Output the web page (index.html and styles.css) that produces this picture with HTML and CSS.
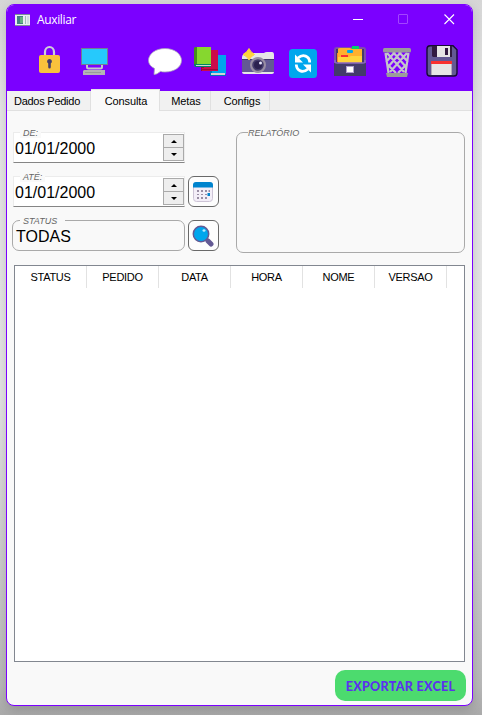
FILE: index.html
```html
<!DOCTYPE html>
<html lang="pt-BR">
<head>
<meta charset="utf-8">
<title>Auxiliar</title>
<link rel="stylesheet" href="styles.css">
</head>
<body>
<div class="window">
  <header class="titlebar">
    <svg class="app-icon" width="15" height="12" viewBox="0 0 15 12"><path fill="#e8eef0" d="M0 0h15v12H0z"/><path fill="#7b9298" d="M0 0h15v1H0zM0 11h15v1H0z"/><path fill="#437d86" d="M2 2h6v8H2z"/><path fill="#65b080" d="M5 3h3v6H5z"/><path fill="#a4b7bd" d="M10 2h1v8h-1z"/><path fill="#d1dce3" d="M12 2h2v8h-2z"/></svg>
    <span class="title">Auxiliar</span>
    <svg class="controls" width="102" height="12" viewBox="0 0 102 12" fill="none"><path stroke="#fff" d="M0 6.500h10"/><rect x="45.500" y="1.500" width="9" height="9" rx=".5" stroke="#a345ff"/><path stroke="#fff" stroke-width="1.100" d="M91.500 1.500l9.500 9.500M101 1.500l-9.500 9.500"/></svg>
  </header>

  <nav class="toolbar">
    <svg class="lock" width="21" height="32" viewBox="0 0 21 32"><path d="M6 11V7a4.500 5 0 0 1 9 0v4" fill="none" stroke="#d0ced8" stroke-width="2.200"/><rect y="10" width="21" height="18" rx="2" fill="#f9c23c"/><path fill="#433b6b" d="M10.500 14a2.500 2.500 0 0 1 1.300 4.600V22q0 1.500-1.300 1.500T9.200 22v-3.400A2.500 2.500 0 0 1 10.500 14z"/></svg>
    <svg class="pc" width="28" height="32" viewBox="0 0 28 32"><path fill="#737c92" d="M0 3h27v17H0z"/><path fill="#26c9fc" d="M1 4h25v15H1z"/><path d="M6 20v2q0 1.500 1.500 1.500h12q1.500 0 1.500-1.500v-2" fill="none" stroke="#c5c5ca" stroke-width="2"/><path fill="#b4b4b4" d="M3 25h21v5H2v-4z"/><path d="M4 27.500h16" stroke="#9a9a9a"/></svg>
    <svg class="chat" width="34" height="32" viewBox="0 0 34 32"><path fill="#fff" stroke="#aaa3bc" stroke-width=".8" d="M17 3.500c9.500 0 16.500 5.500 16.500 12S26.500 27 17 27q-2.500 0-4.500-.6Q9 29.500 6 29.500l.5-6C2.500 21.500.5 18.500.5 15.500c0-6.500 7-12 16.500-12z"/></svg>
    <svg class="books" width="32" height="32" viewBox="0 0 32 32"><path fill="#00a6ed" d="M16 10h16v19H16z"/><path fill="#0074ba" d="M16 10h2v20h-2z"/><path fill="#d3d3d3" d="M17 28h14v2H17z"/><path fill="#0074ba" d="M16 30h16v1H16z"/><path fill="#ca0b4a" d="M8 5h16v19H8z"/><path fill="#990838" d="M7 5h3v21H7z"/><path fill="#ca0b4a" d="M8 23h16v3H8z"/><path fill="#990838" d="M8 24h16v1H8z"/><path fill="#86d72f" d="M2 2h15v18H2z"/><path fill="#44911b" d="M0 3q0-1 2-1h1v18H0z"/><path fill="#d3d3d3" d="M2 20h15v1H2z"/><path fill="#008463" d="M0 19h17v1H2v1h15v1H2q-2 0-2-2z"/></svg>
    <svg class="camera" width="32" height="32" viewBox="0 0 32 32"><path fill="#e6e6e6" d="M0 12q0-2 2-3l7-1h11l2 0q1-1 3-1h5q2 0 2 3v17q0 2-2 2H2q-2 0-2-2z"/><path fill="#635994" d="M0 14h32v13H0z"/><path fill="#433b6b" d="M0 14h32v1H0z"/><circle cx="16" cy="20" r="8" fill="#998ea4"/><circle cx="16" cy="20" r="5.800" fill="#433b6b"/><circle cx="16" cy="20" r="4" fill="#2b2050"/><circle cx="18.500" cy="18" r="1.500" fill="#e9e9ff"/><path fill="#ffd33b" d="M7 3.500q1 3 5.500 6Q8.500 11.500 7 15 5.500 11.500 1 9.500 5.500 7 7 3.500z" stroke="#ffd33b"/></svg>
    <svg class="sync" width="28" height="33" viewBox="0 0 28 33"><rect y="4" width="28" height="29" rx="3.500" fill="#00a6ed"/><path fill="none" stroke="#fff" stroke-width="2.800" d="M9 13C14 8.500 20.500 11 20.700 17.500M19 24C14 28.500 7.500 26 7.300 19.500"/><path fill="#fff" d="M6 9.500v8h8zM22 27.500v-8h-8z"/></svg>
    <svg class="cabinet" width="32" height="32" viewBox="0 0 32 32"><path fill="#7d4cab" d="M0 5q0-3 3-3h26q3 0 3 3v13H0z"/><path fill="#433b6b" d="M2 4h28v14H2z"/><path fill="#00d26a" d="M18 1h7v4h-7z"/><path fill="#ffb02e" d="M4 4q0-1 2-1h10l2 1h10v14H4z"/><path fill="#ff822d" d="M3 8h1v9H3z"/><path fill="#ffd33b" d="M4 12h11l2-1h11v7H4z"/><rect x="13" y="5" width="6" height="3" rx="1" fill="#00a6ed"/><rect x="7" y="10" width="7" height="2" fill="#f8312f"/><path fill="#433b6b" d="M0 18h32v13H0z"/><path fill="none" stroke="#8c67c4" stroke-width="1.500" d="M1 15v2q0 1 2 1h26q2 0 2-1v-2"/><rect x="12.500" y="21.500" width="7" height="6" fill="#fff" stroke="#af9ed0"/></svg>
    <svg class="trash" width="28" height="33" viewBox="0 0 28 33"><path d="M2.500 8l3 20M25.500 8l-3 20M4 8l17 19M24 8L7 27M10 7l13 15M18 7L5 22M16 7l9 10M12 7L3 17M5 20l8 8M23 20l-8 8" stroke="#c4c4cc" stroke-width="2.200" fill="none"/><rect y="3" width="28" height="4.500" rx="1.500" fill="#9b9b9b"/><path fill="#9b9b9b" d="M3 28h22l-1 4H4z"/></svg>
    <svg class="disk" width="32" height="32" viewBox="0 0 32 32"><path fill="#635994" stroke="#150b35" stroke-width="1.400" d="M4 .800h23l4 4V28q0 3-3 3H4q-3 0-3-3V4Q1 .800 4 .800z"/><path fill="#321b41" d="M6 1h20v11H7l-1-1z"/><path fill="#e6e6e6" d="M11 1h13v11H11z"/><path fill="#321b41" d="M19 3h3v7h-3z"/><path fill="#f8312f" d="M5 16h21v3H5z"/><path fill="#e6e6e6" d="M5 19h21v11H5z"/><path fill="#b4acbc" d="M5 19h1v11H5zM25 19h1v11h-1z"/></svg>
  </nav>

  <div class="tabs">
    <div class="tab t1">Dados Pedido</div>
    <div class="tab t2 active">Consulta</div>
    <div class="tab t3">Metas</div>
    <div class="tab t4">Configs</div>
    <div class="tab-rest"></div>
  </div>

  <main class="page">
    <section class="filters">
      <div class="fields">
        <div class="date"><span class="caption">DE:</span><span class="value">01/01/2000</span>
          <div class="spin"><i class="up"></i><i class="down"></i></div></div>
        <div class="date"><span class="caption">ATÉ:</span><span class="value">01/01/2000</span>
          <div class="spin"><i class="up"></i><i class="down"></i></div></div>
        <div class="group status"><span class="caption">STATUS</span><span class="value">TODAS</span></div>
      </div>
      <div class="actions">
        <button class="tool calendar" aria-label="Calendário"><svg width="20" height="20" viewBox="0 0 20 20"><rect x=".5" y=".5" width="19" height="19" rx="3" fill="#f3eef8" stroke="#cdc4d6"/><path fill="#0084ce" d="M0 5.500V3q0-3 3-3h14q3 0 3 3v2.500z"/><path fill="#998ea4" d="M4 8h2v2H4zM8 8h2v2H8zM12 8h2v2h-2zM4 12h2v1H4zM8 12h2v1H8zM12 12h2v1h-2zM4 15h2v2H4zM8 15h2v2H8zM12 15h2v2h-2zM15.500 8h1.500v2h-1.500z"/><path fill="#0084ce" d="M14.500 11h2.500v3h-2.500z"/></svg></button>
        <button class="tool search" aria-label="Pesquisar"><svg width="22" height="22" viewBox="0 0 22 22"><path d="M13.500 13.500l3 3" stroke="#9b9b9b" stroke-width="2.500"/><path d="M16 16l3 3" stroke="#635994" stroke-width="5" stroke-linecap="round"/><circle cx="9" cy="9" r="7.700" fill="#00a6ed" stroke="#635994" stroke-width="1.500"/><ellipse cx="12" cy="5.500" rx="1.500" ry="1.200" fill="#b8edff"/></svg></button>
      </div>
      <div class="group report"><span class="caption">RELATÓRIO</span></div>
    </section>

    <div class="table">
      <div class="thead"><span>STATUS</span><span>PEDIDO</span><span>DATA</span><span>HORA</span><span>NOME</span><span>VERSAO</span></div>
    </div>
    <button class="export">EXPORTAR EXCEL</button>
  </main>
</div>
</body>
</html>
```
FILE: styles.css
```css
* { box-sizing: border-box; }
body {
  margin: 0;
  width: 482px;
  height: 715px;
  padding: 4px 9px 9px 6px;
  overflow: hidden;
  background: linear-gradient(#d6d6d6, #e6e6e6 15%, #e4e4e4 55%, #b8b8b8 96%, #aaa);
  font-family: "Liberation Sans", Arial, sans-serif;
  color: #000;
}
.window {
  width: 467px;
  height: 702px;
  border: 1px solid #7b00ff;
  border-radius: 8px;
  background: #f9f9f9;
  overflow: hidden;
  box-shadow: 0 4px 12px rgba(0, 0, 0, .16);
  display: flex;
  flex-direction: column;
}
.titlebar {
  height: 31px;
  flex: none;
  background: #7b00ff;
  display: flex;
  align-items: center;
  padding: 0 17px 0 8px;
}
.app-icon { margin-top: -2px; }
.title {
  margin: -3px 0 0 7px;
  color: #fff;
  font: 12px "Open Sans", "Noto Sans", sans-serif;
  letter-spacing: -.35px;
}
.controls { margin: -3px 0 0 auto; }
.toolbar {
  height: 55px;
  flex: none;
  background: #7b00ff;
  display: flex;
  padding: 9px 0 0 32px;
}
.toolbar svg { flex: none; }
.pc { margin-left: 21px; }
.chat { margin-left: 39px; }
.books { margin-left: 12px; }
.camera { margin-left: 16px; }
.sync { margin-left: 15px; }
.cabinet { margin-left: 17px; }
.trash { margin-left: 17px; }
.disk { margin-left: 15px; }

.tabs {
  display: flex;
  height: 20px;
  flex: none;
  background: #efefef;
  font-size: 11px;
  letter-spacing: -.1px;
}
.tab {
  height: 20px;
  padding-top: 4px;
  padding-left: 2px;
  line-height: 13px;
  text-align: center;
  border-right: 1px solid #e0e0e0;
  border-bottom: 1px solid #e0e0e0;
  background: #f1f1f1;
  white-space: nowrap;
}
.t1 { width: 84px; padding: 4px 3px 0 0; letter-spacing: -.25px; }
.t2 { width: 69px; }
.t3 { width: 51px; }
.t4 { width: 59px; padding-left: 4px; }
.tab.active {
  height: 22px;
  margin-top: -2px;
  padding-top: 5px;
  background: #f9f9f9;
  border-bottom: 0;
  border-top: 1px solid #e6e6e6;
}
.tab-rest { flex: 1; border-bottom: 1px solid #e0e0e0; }

.page {
  flex: 1;
  padding: 21px 6px 0 5px;
  display: flex;
  flex-direction: column;
}
.filters { display: flex; height: 121px; flex: none; }
.fields {
  width: 173px;
  display: flex;
  flex-direction: column;
  gap: 13px;
}
.date, .group { position: relative; display: flex; }
.date {
  height: 31px;
  margin: 0 0 0 1px;
  border: 1px solid #ececec;
  border-bottom-color: #858585;
  background: #fff;
}
.value { font-size: 16px; line-height: 18px; padding: 7px 0 0 1px; }
.caption {
  position: absolute;
  left: 6px;
  top: -6px;
  height: 11px;
  padding: 0 3px;
  background: #f9f9f9;
  color: #666;
  font-size: 9px;
  line-height: 12px;
  font-style: italic;
}
.spin {
  width: 21px;
  height: 27px;
  margin: 1px 0 0 auto;
  border: 1px solid #aaa;
  background: #eee;
  display: flex;
  flex-direction: column;
}
.spin i { flex: 1; display: flex; align-items: center; justify-content: center; }
.spin i + i { border-top: 1px solid #aaa; }
.spin i::before {
  content: "";
  border: solid transparent;
  border-width: 0 3px 3px;
  border-bottom-color: #000;
}
.spin .down::before { border-width: 3px 3px 0; border-top-color: #000; }
.group { border: 1px solid #a9a9a9; border-radius: 7px; }
.status { height: 31px; }
.status .value { padding: 7px 0 0 3px; }
.status .caption { left: 7px; width: 45px; }
.actions {
  width: 31px;
  margin: 44px 0 0 3px;
  display: flex;
  flex-direction: column;
  gap: 13px;
}
.tool {
  width: 31px;
  height: 31px;
  flex: none;
  padding: 0;
  border: 1px solid #696969;
  border-radius: 6px;
  background: #fdfdfd;
  display: flex;
  align-items: center;
  justify-content: center;
}
.calendar { padding: 1px 1px 0 0; }
.search { padding: 1px 1px 0 0; }
.report { width: 229px; margin-left: 17px; }
.report .caption { left: 11px; width: 61px; padding: 0; }

.table {
  margin: 12px 0 0 2px;
  width: 451px;
  height: 397px;
  flex: none;
  border: 1px solid #828790;
  background: #fff;
}
.thead { display: flex; font-size: 11px; letter-spacing: -.3px; }
.thead span {
  width: 72px;
  height: 22px;
  line-height: 23px;
  text-align: center;
  border-right: 1px solid #e2e2e2;
}
.export {
  align-self: flex-end;
  width: 131px;
  height: 31px;
  margin: 8px 0 0;
  padding: 2px 0 0;
  border: 0;
  border-radius: 10px;
  background: #4cdb6e;
  color: #5b32ed;
  font: 900 12.500px Lato, sans-serif;
  letter-spacing: .3px;
  white-space: nowrap;
}
```
